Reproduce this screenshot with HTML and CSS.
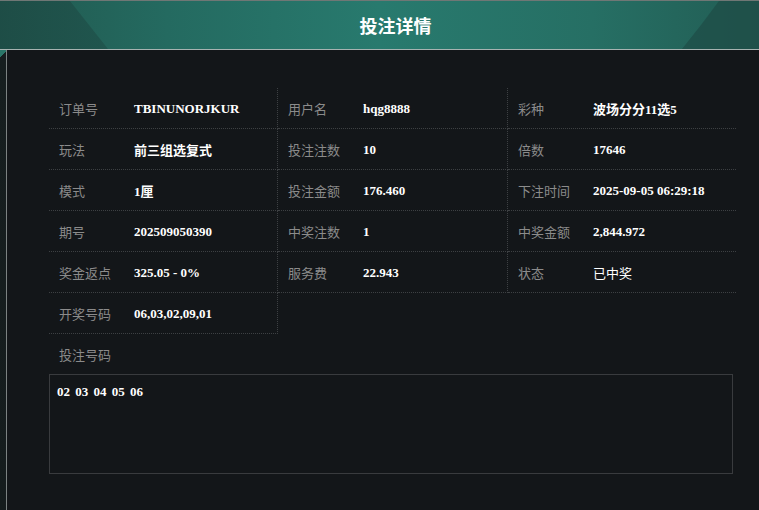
FILE: index.html
```html
<!DOCTYPE html>
<html lang="zh-CN">
<head>
<meta charset="utf-8">
<title>投注详情</title>
<link rel="stylesheet" href="styles.css">
</head>
<body>
<div class="modal">
  <header class="head">
    <h1 class="title">投注详情</h1>
  </header>
  <div class="main">
    <div class="rail"></div>
    <div class="content">
      <div class="grid">
        <div class="cell"><span class="lbl">订单号</span><span class="val">TBINUNORJKUR</span></div>
        <div class="cell"><span class="lbl">用户名</span><span class="val">hqg8888</span></div>
        <div class="cell last"><span class="lbl">彩种</span><span class="val">波场分分11选5</span></div>

        <div class="cell"><span class="lbl">玩法</span><span class="val">前三组选复式</span></div>
        <div class="cell"><span class="lbl">投注注数</span><span class="val">10</span></div>
        <div class="cell last"><span class="lbl">倍数</span><span class="val">17646</span></div>

        <div class="cell"><span class="lbl">模式</span><span class="val">1厘</span></div>
        <div class="cell"><span class="lbl">投注金额</span><span class="val">176.460</span></div>
        <div class="cell last"><span class="lbl">下注时间</span><span class="val">2025-09-05 06:29:18</span></div>

        <div class="cell"><span class="lbl">期号</span><span class="val">202509050390</span></div>
        <div class="cell"><span class="lbl">中奖注数</span><span class="val">1</span></div>
        <div class="cell last"><span class="lbl">中奖金额</span><span class="val">2,844.972</span></div>

        <div class="cell"><span class="lbl">奖金返点</span><span class="val">325.05 - 0%</span></div>
        <div class="cell"><span class="lbl">服务费</span><span class="val">22.943</span></div>
        <div class="cell last"><span class="lbl">状态</span><span class="val plain">已中奖</span></div>

        <div class="cell"><span class="lbl">开奖号码</span><span class="val">06,03,02,09,01</span></div>
      </div>
      <div class="bet-label"><span class="lbl">投注号码</span></div>
      <div class="bet-box">02 03 04 05 06</div>
    </div>
  </div>
</div>
</body>
</html>
```

FILE: styles.css
```css
* { box-sizing: border-box; }
html, body {
  margin: 0;
  padding: 0;
  background: #131619;
  width: 759px;
  height: 510px;
  overflow: hidden;
}
body {
  font-family: "Noto Sans CJK SC", "Noto Sans", sans-serif;
}
.modal {
  display: flex;
  flex-direction: column;
  height: 510px;
}
.head {
  position: relative;
  height: 50px;
  flex: none;
  border-top: 1px solid #6f7775;
  border-bottom: 1px solid #a7b3b1;
  background: linear-gradient(90deg, #21594f 0%, #246a60 22%, #287a6e 50%, #266f64 78%, #225d54 100%);
  display: flex;
  align-items: center;
  justify-content: center;
  padding-left: 32px;
  overflow: hidden;
}
.head::before {
  content: "";
  position: absolute;
  left: 0; top: 0;
  width: 110px; height: 48px;
  background: linear-gradient(90deg, #1d4a44, #1f524b);
  opacity: 0.8;
  clip-path: polygon(0 0, 70px 0, 108px 48px, 0 48px);
}
.head::after {
  content: "";
  position: absolute;
  right: 0; top: 0;
  width: 80px; height: 48px;
  background: #1e4c46;
  opacity: 0.7;
  clip-path: polygon(40px 0, 80px 0, 80px 48px, 3px 48px, 22px 24px);
}
.title {
  position: relative;
  z-index: 1;
  margin: 0;
  font-size: 18px;
  font-weight: 700;
  color: #ffffff;
  line-height: 1;
}
.main {
  flex: 1;
  display: flex;
}
.rail {
  width: 6px;
  flex: none;
  background: linear-gradient(135deg, #2a7668 0, #2a7668 5px, #161e1f 5px, #151c1d 100%);
}
.content {
  flex: 1;
  border-left: 1px solid #7c8282;
  padding: 38px 23px 0 42px;
}
.grid {
  display: grid;
  grid-template-columns: 229px 230px 228px;
  grid-auto-rows: 41px;
}
.cell {
  display: flex;
  align-items: center;
  padding-left: 10px;
  border-bottom: 1px dotted #3d4043;
  border-right: 1px dotted #3d4043;
}
.cell.last {
  border-right: none;
}
.lbl {
  width: 75px;
  flex: none;
  font-size: 13px;
  color: #8b8b8b;
  font-family: "Noto Sans CJK SC", "Noto Sans", sans-serif;
}
.val {
  font-size: 13px;
  font-weight: 700;
  color: #ffffff;
  font-family: "Liberation Serif", "Noto Sans CJK SC", serif;
  padding-top: 1px;
}
.val.plain {
  font-weight: 400;
  font-family: "Noto Sans CJK SC", sans-serif;
  padding-top: 0;
}
.bet-label {
  height: 40px;
  display: flex;
  align-items: center;
  padding-left: 10px;
}
.bet-box {
  width: 684px;
  height: 100px;
  border: 1px solid #393b3e;
  padding: 9px 7px;
  font-family: "Liberation Serif", serif;
  font-weight: 700;
  font-size: 13px;
  line-height: 16px;
  color: #ffffff;
  word-spacing: 2px;
}
```
